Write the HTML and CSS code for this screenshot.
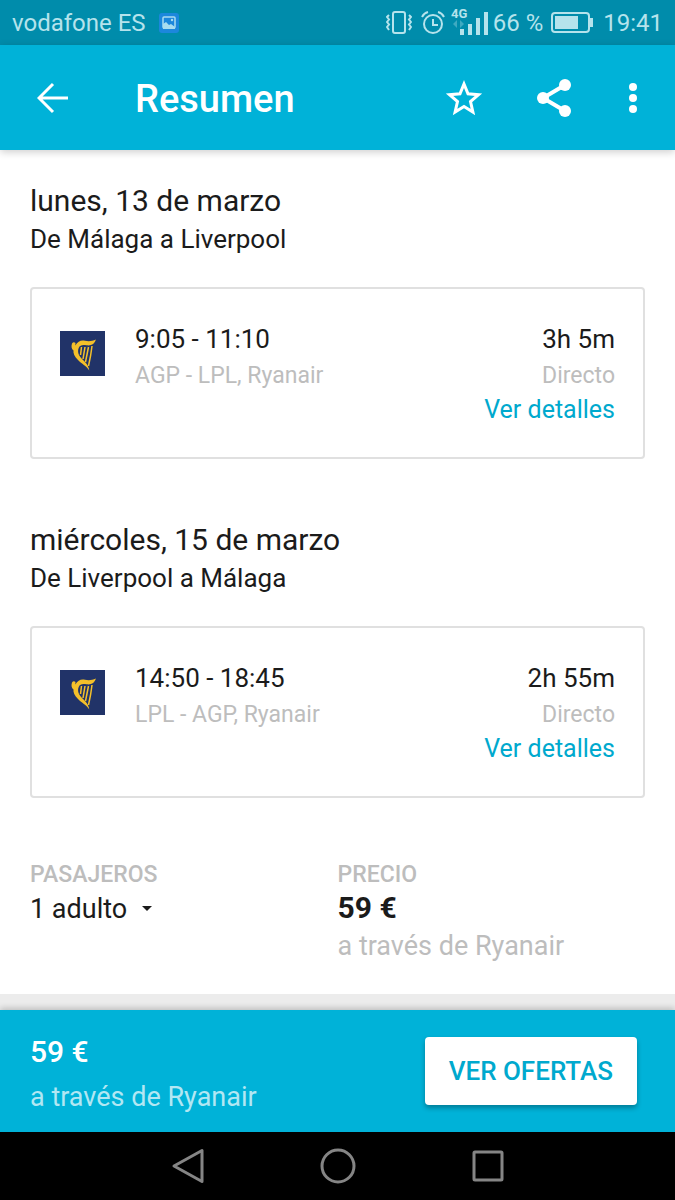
FILE: index.html
```html
<!DOCTYPE html>
<html lang="es">
<head>
    <meta charset="UTF-8">
    <meta name="viewport" content="width=device-width, initial-scale=1.0">
    <title>Resumen</title>
    <link rel="stylesheet" href="styles.css">
</head>
<body>
    <!-- shared airline logo -->
    <svg class="sprite" width="0" height="0" aria-hidden="true">
        <symbol id="ryanair" viewBox="0 0 45 45">
            <rect width="45" height="45" fill="#213368"/>
            <path d="M12 12.500q1.500-2 3.500-.5l-.2 2.500C18 10.500 20.500 9 25 9.800c4 .7 7 .4 11-1.300-1.500 4.500-4.500 6.500-9.500 5.800-4-.6-6.500-.3-7.800 2.700-1.700 4 .3 8 3.300 11 3.500 3.500 6.500 6 7.300 11.500-3.300-5-7.300-6.500-11.300-10.500-3.500-3.500-5-7-4.500-9.500-2-1.500-2.500-4-1.500-7z" fill="#f4c02a"/>
            <path d="M21.500 16l-1 8M25 16l-2 12M28.500 16l-3 15M32 15q-1 9-3.500 20" fill="none" stroke="#f4c02a" stroke-width="1.500"/>
        </symbol>
    </svg>

    <div class="status-bar">
        <span>vodafone ES</span>
        <svg class="notice" width="22" height="22" viewBox="0 0 22 22">
            <rect x="1" y="1" width="20" height="20" rx="3" fill="#1c87dc"/>
            <rect x="5" y="5" width="12" height="11" rx="1" fill="none" stroke="#a9dcef" stroke-width="1.500"/>
            <path d="M5 12l3-2 3 3 2-1 4 3v2H5z" fill="#a9dcef"/>
            <circle cx="14" cy="8" r="1.200" fill="#a9dcef"/>
        </svg>
        <div class="status-icons">
            <svg width="26" height="24" viewBox="0 0 26 24" fill="none" stroke="currentColor" stroke-width="2">
                <rect x="7" y="1" width="12" height="21" rx="2"/>
                <path d="M3 4l-2 2 2 2.500-2 2.500 2 2.500-2 2.500 2 3M23 4l2 2-2 2.500 2 2.500-2 2.500 2 2.500-2 3" stroke-width="2"/>
            </svg>
            <svg class="alarm" width="24" height="24" viewBox="0 0 24 24" fill="none" stroke="currentColor" stroke-width="2">
                <circle cx="12" cy="13" r="9"/>
                <path d="M12 8v6h5M1 6q2-4 6-5M23 6q-2-4-6-5"/>
            </svg>
            <svg class="signal" width="38" height="34" viewBox="0 0 38 34" fill="currentColor">
                <text class="network" x="0" y="12">4G</text>
                <path d="M2 18l4-4v8zM13 18l-4-4v8z" opacity=".35"/>
                <path d="M9 23h4v6H9zM17 18h4v11h-4zM25 12h4v17h-4zM33 6h4v23h-4z"/>
            </svg>
            <span>66 %</span>
            <svg class="battery" width="42" height="22" viewBox="0 0 42 22">
                <rect x="1" y="1" width="37" height="19" rx="3" fill="none" stroke="currentColor" stroke-width="2"/>
                <path d="M4 4h23v13H4zM39 6h3v9h-3z" fill="currentColor"/>
            </svg>
            <span>19:41</span>
        </div>
    </div>

    <header class="app-bar">
        <button class="icon-btn back" aria-label="Volver">
            <svg width="32" height="32" viewBox="0 0 32 32" fill="none" stroke="currentColor" stroke-width="3">
                <path d="M31 16H3M16 2L2 16l14 14"/>
            </svg>
        </button>
        <h1>Resumen</h1>
        <div class="actions">
            <button class="icon-btn" aria-label="Guardar">
                <svg width="38" height="38" viewBox="0 0 38 38" fill="none" stroke="currentColor" stroke-width="3">
                    <path d="M19 5l4 9.800 10.500.9-8 6.900 2.400 10.400L19 27.500 10.100 33l2.400-10.400-8-6.900 10.500-.9z"/>
                </svg>
            </button>
            <button class="icon-btn" aria-label="Compartir">
                <svg width="38" height="38" viewBox="0 0 38 38" fill="currentColor">
                    <path d="M30 6L8 19l22 13" fill="none" stroke="currentColor" stroke-width="4"/>
                    <circle cx="8" cy="19" r="6"/>
                    <circle cx="30" cy="6" r="6"/>
                    <circle cx="30" cy="32" r="6"/>
                </svg>
            </button>
            <button class="icon-btn more" aria-label="Más opciones">
                <svg width="10" height="32" viewBox="0 0 10 32" fill="currentColor">
                    <circle cx="5" cy="5" r="4"/>
                    <circle cx="5" cy="16" r="4"/>
                    <circle cx="5" cy="27" r="4"/>
                </svg>
            </button>
        </div>
    </header>

    <main>
        <section class="trip">
            <h2>lunes, 13 de marzo</h2>
            <p class="route">De Málaga a Liverpool</p>
            <div class="card">
                <svg class="logo" width="45" height="45" role="img" aria-label="Ryanair"><use href="#ryanair"/></svg>
                <div class="flight">
                    <p class="time">9:05 - 11:10</p>
                    <p class="info">AGP - LPL, Ryanair</p>
                </div>
                <div class="duration">
                    <p class="time">3h 5m</p>
                    <p class="info">Directo</p>
                    <a href="#">Ver detalles</a>
                </div>
            </div>
        </section>

        <section class="trip">
            <h2>miércoles, 15 de marzo</h2>
            <p class="route">De Liverpool a Málaga</p>
            <div class="card">
                <svg class="logo" width="45" height="45" role="img" aria-label="Ryanair"><use href="#ryanair"/></svg>
                <div class="flight">
                    <p class="time">14:50 - 18:45</p>
                    <p class="info">LPL - AGP, Ryanair</p>
                </div>
                <div class="duration">
                    <p class="time">2h 55m</p>
                    <p class="info">Directo</p>
                    <a href="#">Ver detalles</a>
                </div>
            </div>
        </section>

        <section class="summary">
            <div>
                <label class="label" for="passengers">PASAJEROS</label>
                <div class="select-wrap">
                    <select id="passengers">
                        <option>1 adulto</option>
                    </select>
                    <svg width="10" height="6" viewBox="0 0 10 6"><path d="M0 0h10L5 5z" fill="#1b1b1b"/></svg>
                </div>
            </div>
            <div>
                <p class="label">PRECIO</p>
                <p class="price">59 €</p>
                <p class="via">a través de Ryanair</p>
            </div>
        </section>
    </main>

    <footer class="offer-bar">
        <div>
            <p class="total">59 €</p>
            <p class="seller">a través de Ryanair</p>
        </div>
        <button class="btn">VER OFERTAS</button>
    </footer>

    <nav class="nav-bar">
        <button class="nav-btn" aria-label="Atrás">
            <svg width="36" height="36" viewBox="0 0 36 36"><path d="M32 2.500v31L4 18z"/></svg>
        </button>
        <button class="nav-btn" aria-label="Inicio">
            <svg width="36" height="36" viewBox="0 0 36 36"><circle cx="18" cy="18" r="16"/></svg>
        </button>
        <button class="nav-btn" aria-label="Recientes">
            <svg width="36" height="36" viewBox="0 0 36 36"><rect x="4" y="4" width="28" height="28" rx="1"/></svg>
        </button>
    </nav>
</body>
</html>
```
FILE: styles.css
```css
* { box-sizing: border-box; }
body { margin: 0; min-height: 100vh; display: flex; flex-direction: column; background: #ececec; color: #1b1b1b; font-family: Roboto, "Liberation Sans", sans-serif; }
h1, h2, p { margin: 0; font-weight: 400; }
button { border: none; padding: 0; background: none; color: inherit; font-family: inherit; cursor: pointer; }
svg { display: block; flex-shrink: 0; }
.sprite { position: absolute; }

.status-bar { display: flex; align-items: center; height: 45px; padding: 0 12px; background: #008cab; color: #b5e3ec; font-size: 24px; }
.notice { margin-left: 12px; }
.status-icons { display: flex; align-items: center; margin-left: auto; }
.alarm { margin-left: 9px; }
.signal { margin: 0 4px 0 6px; }
.network { font-size: 13px; font-weight: 700; }
.battery { margin: 0 10px 0 8px; }

.app-bar { position: relative; display: flex; align-items: center; height: 105px; padding: 0 30px; background: #00b2d8; color: white; box-shadow: 0 2px 8px rgba(0,0,0,0.2); }
.app-bar h1 { font-size: 38px; font-weight: 500; line-height: 48px; padding-top: 2px; }
.icon-btn { display: flex; align-items: center; justify-content: center; width: 46px; height: 48px; }
.back { margin-right: 59px; }
.actions { display: flex; gap: 44px; margin-left: auto; }
.more { width: 24px; }

main { background: white; padding: 32px 30px 28px; }
.trip { margin-bottom: 62px; }
.trip h2 { font-size: 30px; line-height: 38px; }
.route { font-size: 26px; line-height: 38px; margin-bottom: 29px; }
.card { display: flex; gap: 30px; padding: 30px 28px; border: 2px solid #e0e0e0; border-radius: 4px; }
.logo { margin-top: 12px; }
.time { font-size: 26px; line-height: 40px; }
.info { font-size: 23px; line-height: 34px; color: #bdbdbd; }
.duration { margin-left: auto; text-align: right; }
.duration a { display: block; font-size: 25px; line-height: 34px; color: #00a9ce; text-decoration: none; }

.summary { display: grid; grid-template-columns: 1fr 1fr; }
.label { display: block; font-size: 23px; font-weight: 500; line-height: 30px; color: #bdbdbd; }
.select-wrap { display: flex; align-items: center; gap: 14px; }
.select-wrap select { appearance: none; border: none; padding: 0; background: none; color: inherit; font-family: inherit; font-size: 27px; line-height: 38px; }
.price { font-size: 30px; font-weight: 700; line-height: 36px; }
.via { font-size: 27px; line-height: 40px; color: #bdbdbd; }

.offer-bar { display: flex; align-items: center; justify-content: space-between; height: 122px; margin-top: auto; padding: 0 38px 0 30px; background: #00b2d8; color: white; box-shadow: 0 -2px 6px rgba(0,0,0,0.2); }
.total { font-size: 30px; font-weight: 500; line-height: 52px; }
.seller { font-size: 27px; line-height: 38px; color: #b2e7f3; }
.btn { padding: 16px 24px; border-radius: 4px; background: white; color: #00a9ce; font-size: 26px; font-weight: 500; line-height: 36px; box-shadow: 0 3px 5px rgba(0,0,0,0.3); }

.nav-bar { display: flex; justify-content: center; gap: 114px; height: 68px; background: black; }
.nav-btn { width: 36px; }
.nav-btn svg { fill: none; stroke: #858585; stroke-width: 3; stroke-linejoin: round; }
```
